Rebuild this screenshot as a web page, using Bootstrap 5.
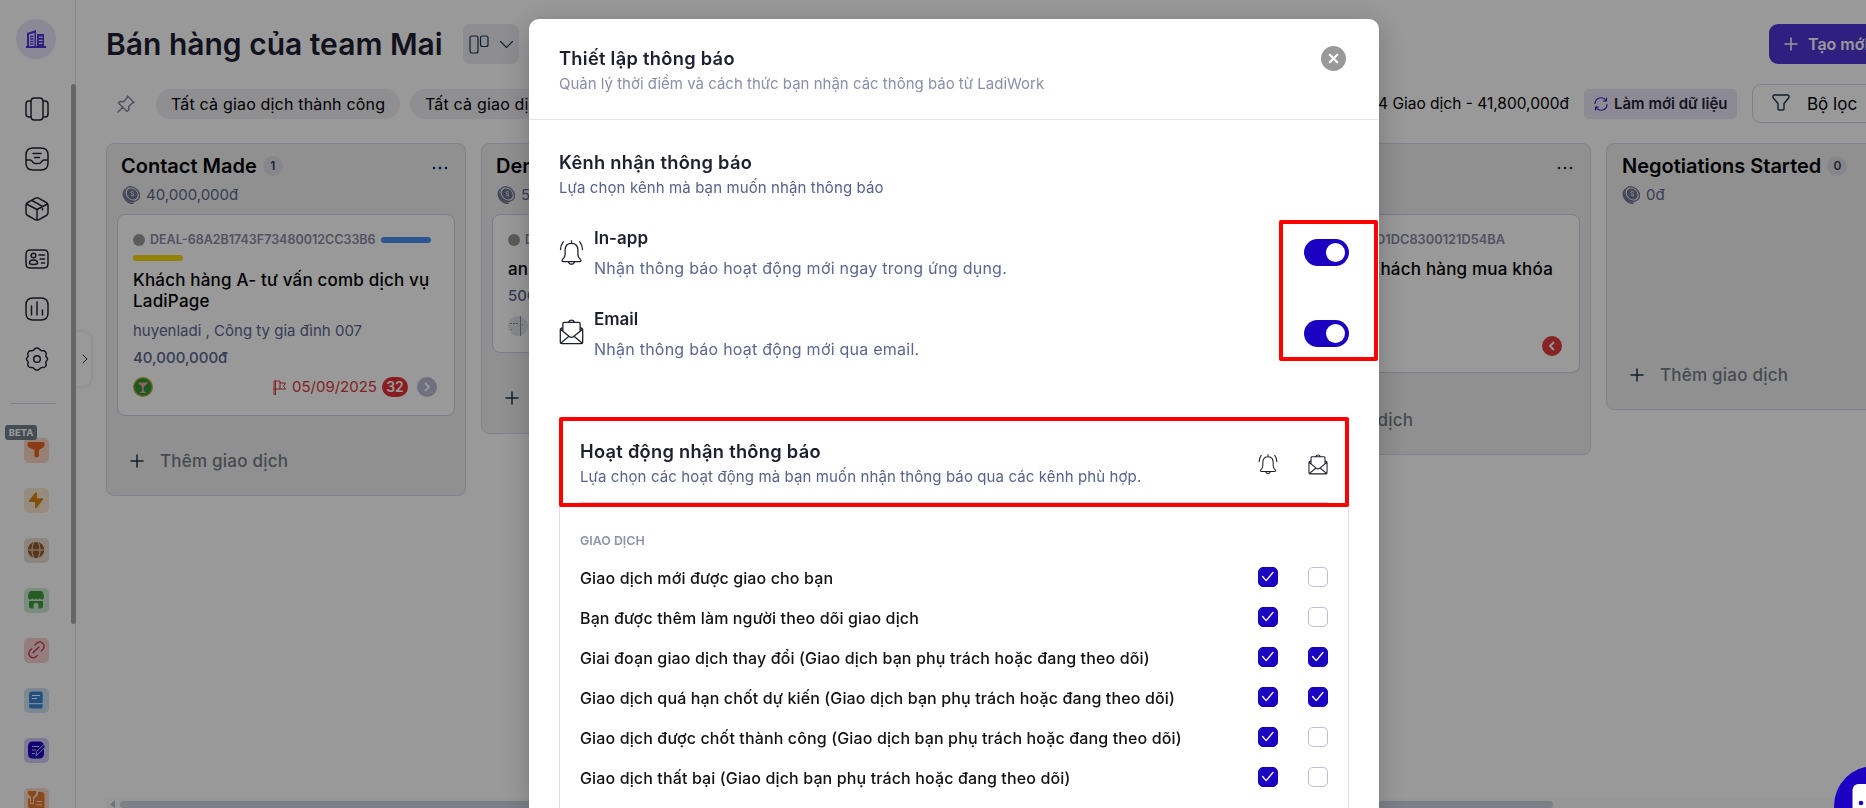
<!DOCTYPE html>
<html lang="vi">
<head>
<meta charset="utf-8">
<meta name="viewport" content="width=device-width, initial-scale=1">
<title>LadiWork - Thiết lập thông báo</title>
<link href="https://cdn.jsdelivr.net/npm/bootstrap@5.3.0/dist/css/bootstrap.min.css" rel="stylesheet">
<style>
body{font-family:Inter,"Liberation Sans",sans-serif;font-size:15px;line-height:20px;color:#000;height:100vh;overflow:hidden;background:#fff}
svg{display:block;flex:none}
.ln{fill:none;stroke:currentColor;stroke-linecap:round;stroke-linejoin:round}
.app{height:100vh;overflow:hidden}
.side{width:76px;flex:none;position:relative;border-right:1px solid #e4e4ec;color:#252435}
.side .logo{width:40px;height:40px;background:#eae5fb;border-radius:50%;margin:19px 0 25px 16px}
.side .ico{height:50px;width:73px}
.side .line{height:1px;background:#d5d5e8;width:45px;margin:19px 0 21px 11px}
.tile{width:25px;height:25px;border-radius:5px}
.beta{position:absolute;left:5px;top:425px;width:32px;height:15px;background:#72808c;color:#fff;font-size:9.5px;font-weight:700;line-height:15px;text-align:center;border-radius:3px}
.vbar{position:absolute;left:71px;top:84px;width:5px;height:540px;background:#aaa;border-radius:3px}
.tab-x{position:absolute;left:76px;top:332px;width:15px;height:54px;border-radius:0 8px 8px 0;box-shadow:0 0 4px rgba(0,0,0,.15);background:#fff;clip-path:inset(-5px -5px -5px 0);padding-left:3px}
.main{flex:1;min-width:0;padding-left:30px;overflow:hidden;position:relative}
.title{font-size:30px;font-weight:600;line-height:40px;color:#1e1f33}
.top{padding-top:24px;height:84px}
.view{width:56px;height:40px;border-radius:8px;background:#eaeaf2;margin-left:20px;color:#1c344c}
.new{width:150px;height:40px;border-radius:9px;background:#4f34d6;color:#fff;font-weight:600;font-size:16px}
.pill{height:30px;border-radius:15px;background:#eeeef4;font-size:16px;letter-spacing:.18px;line-height:30px;white-space:nowrap}
.reload{width:153px;height:30px;border-radius:5px;background:#eae8f6;font-weight:600;font-size:15px;color:#27243a}
.filt{width:150px;height:39px;border:1px solid #d5d5e8;border-radius:9px;font-size:17px}
.board{gap:15px;margin-top:20px}
.lane{width:360px;flex:none;border:1px solid #d8d8e8;border-radius:8px;background:#f0f0f0;padding:9px 10px}
.lane-t{font-size:20px;font-weight:600;line-height:26px}
.lane-s{height:31px;padding-left:5px;gap:6px}
.dots{margin-top:3px}
.cnt{width:20px;height:20px;border-radius:50%;background:#dfdfeb;font-size:12px;font-weight:600;color:#3c3c50;margin-left:6px}
.muted{color:#5c6690}
.deal{border:1px solid #d0d0e6;border-radius:8px;background:#fff;padding:15px;height:202px;margin:4px 0 0;width:338px}
.code{font-size:12.5px;font-weight:600;color:#8989a5;line-height:20px;white-space:nowrap}
.dot{width:12px;height:12px;border-radius:50%;background:#999;flex:none}
.tag{height:6px;width:50px;border-radius:3px;flex:none}
.deal-t{font-size:17px;font-weight:500;line-height:21px;letter-spacing:.2px}
.add{color:#747d86;font-size:17px;font-weight:500;line-height:20px;letter-spacing:.22px;padding-left:13px;gap:16px}
.add svg{color:#1c344c}
.date{color:#d93a3a;font-size:15px}
.hs{position:absolute;left:30px;right:0;bottom:0;height:10px;background:#fafafa}
.hs i{position:absolute;left:14px;width:1433px;top:3px;height:7px;border-radius:4px;background:#ccd5df}
.shade{position:fixed;inset:0;background:rgba(0,0,0,.4)}
.dlg{position:fixed;left:529px;top:19px;width:850px;height:789px;background:#fff;border-radius:10px 10px 0 0;box-shadow:0 6px 30px rgba(0,0,0,.24);color:#1e1f2e}
.dlg-h{height:101px;border-bottom:1px solid #e6e6e6;padding:27px 33px 0 30px}
h2.hd{font-size:18.3px;font-weight:600;line-height:24px;margin:0;letter-spacing:.28px}
.sub{font-size:15px;line-height:20px;color:#56628c;letter-spacing:.11px}
.x{width:25px;height:25px;border-radius:50%;background:#999}
.chan{height:60px;margin-bottom:21px;color:#1e1f2e}
.chan b{font-size:17px;font-weight:600;line-height:22px;display:block}
.chan p{font-size:16px;line-height:22px;margin:8px 0 0;letter-spacing:.24px}
.sw{width:45px;height:27px;border-radius:14px;background:#1b00c2;padding:4px;margin-bottom:2px}
.sw i{width:19px;height:19px;border-radius:50%;background:#fff}
.act{border:1px solid #dfdfee;height:440px;margin-top:54px}
.act-h{height:84px;margin:0 20px;border-bottom:1px solid #d0d0e6;padding-top:20px}
.act-h svg{margin-top:15px}
.grp{font-size:12.4px;font-weight:600;color:#8e91ac;margin:28px 20px 7px}
.rw{height:40px;padding:0 20px;font-size:16px;font-weight:500;color:#111;letter-spacing:.13px}
.cb{width:20px;height:20px;border-radius:5px;border:1px solid #bbbdda;margin:0 0 2px 30px;flex:none}
.cb.on{background:#1b00c2;border-color:#1b00c2}
.red{position:absolute;border:4px solid #f00;border-radius:2px}
.chat{position:fixed;left:1834px;top:766px;width:80px;height:80px;border-radius:50%;background:#1b00c2}
</style>
</head>
<body>
<svg width="0" height="0" class="position-absolute">
<symbol id="bell" viewBox="0 0 24 26"><path class="ln" stroke-width="1.3" d="M12 .8v2.6M12 3.4c-4 0-6.200 2.700-6.400 6.400v4.800c0 2-1 3.600-2.600 5-.9.9-.4 2 .8 2h16.400c1.200 0 1.700-1.100.8-2-1.600-1.400-2.600-3-2.600-5V9.800C18.200 6.100 16 3.400 12 3.400M9 21.800a3.100 3.100 0 0 0 6 0M3.700 1.800C2 3.900 1 6.500 1 9.500M20.300 1.800c1.700 2.100 2.700 4.700 2.700 7.700"/></symbol>
<symbol id="mail" viewBox="0 0 24 26"><path class="ln" stroke-width="1.3" d="M3.400 12V4.500c0-.7.5-1.200 1.200-1.200h14.800c.7 0 1.200.5 1.200 1.200V12M9 3.200c.5-1.200 1.600-2 3-2s2.500.8 3 2M3.400 8.200 1.400 9.600c-.4.300-.6.700-.6 1.200v12.400c0 .8.600 1.400 1.400 1.400h19.600c.8 0 1.400-.6 1.400-1.400V10.800c0-.5-.2-.9-.6-1.200l-2-1.400M1 10.300l8.800 7.200c1.400 1.200 3 1.200 4.400 0L23 10.300M1.500 24l8-6.700M22.500 24l-8-6.700"/></symbol>
<symbol id="coin" viewBox="0 0 18 18"><g fill="none" stroke="#6f7594" stroke-width="1.300"><ellipse cx="10.200" cy="8" rx="8" ry="6.400" transform="rotate(45 10.200 8)"/><ellipse cx="10.200" cy="8" rx="5.400" ry="4.200" transform="rotate(45 10.200 8)" fill="#6f7594"/><path d="M3 3.200C-.6 8 5 16.500 12.500 15.800M1.700 5.500C-.5 11 5.500 18 11.500 17.300"/><path stroke="#eee" stroke-width="1" d="M12 6.600C10.600 5 8.600 5.300 8.900 6.800c.3 1.300 2.700.7 2.900 2.100.1 1.200-1.800 1.300-2.900.1"/></g></symbol>
<symbol id="plus" viewBox="0 0 14 14"><path class="ln" stroke-width="1.500" d="M7 1v12M1 7h12"/></symbol>
<symbol id="dots" viewBox="0 0 16 4"><g fill="#1c344c"><circle cx="2" cy="2" r="1.300"/><circle cx="8" cy="2" r="1.300"/><circle cx="14" cy="2" r="1.300"/></g></symbol>
<symbol id="tick" viewBox="0 0 20 20"><path fill="none" stroke="#fff" stroke-width="1.500" stroke-linecap="round" stroke-linejoin="round" d="m4 9.500 4 4.500 7.500-9"/></symbol>
</svg>
<div class="app d-flex">
<aside class="side">
  <div class="logo d-flex align-items-center justify-content-center"><svg width="20" height="18" viewBox="0 0 20 18"><path fill="#4f34d6" fill-rule="evenodd" d="M0 16h1V3L10 0v16h1V4h7v12h2v2H0zM3 4.500V16h5.500V3zM13 6.500v1.300h3.500V6.500zm0 3.200V11h3.500V9.700zm0 3.100v1.300h3.500v-1.300z"/><path stroke="#4f34d6" stroke-width="1.300" d="M4 6.500h3.500M4 9h3.500M4 11.500h3.500M4 14h3.500"/></svg></div>
  <div class="ico d-flex align-items-center justify-content-center"><svg width="24" height="24" viewBox="0 0 24 24"><path class="ln" stroke-width="1.500" d="M9.500 1h5C17 1 18 2 18 4.500v15c0 2.500-1 3.500-3.500 3.500h-5C7 23 6 22 6 19.500v-15C6 2 7 1 9.500 1zM6 4H4C2 4 1 5 1 7v10c0 2 1 3 3 3h2M18 4h2c2 0 3 1 3 3v10c0 2-1 3-3 3h-2"/></svg></div>
  <div class="ico d-flex align-items-center justify-content-center"><svg width="24" height="24" viewBox="0 0 24 24"><path class="ln" stroke-width="1.500" d="M8 1h8c5 0 7 2 7 7v8c0 5-2 7-7 7H8c-5 0-7-2-7-7V8c0-5 2-7 7-7zM1 13h4c1 0 1.700.5 2.300 1.400l.6 1c1 1.600 7.200 1.600 8.200 0l.6-1c.6-.9 1.300-1.400 2.300-1.400h4M8 6.500h8M9.500 10.500h5"/></svg></div>
  <div class="ico d-flex align-items-center justify-content-center"><svg width="24" height="24" viewBox="0 0 24 24"><path class="ln" stroke-width="1.500" d="M10.500 1.200 2.700 5.500C1.500 6.200 1 7 1 8.200v7.600c0 1.200.5 2 1.700 2.700l7.800 4.300c1 .5 2 .5 3 0l7.800-4.300c1.200-.7 1.700-1.500 1.700-2.700V8.200c0-1.200-.5-2-1.700-2.700l-7.800-4.300c-1-.5-2-.5-3 0zM1.500 7 12 12.500 22.500 7M12 12.500V23M7 3.500l10.500 5.800V13"/></svg></div>
  <div class="ico d-flex align-items-center justify-content-center"><svg width="24" height="24" viewBox="0 0 24 24"><path class="ln" stroke-width="1.500" d="M6 3h12c4 0 5 1 5 5v8c0 4-1 5-5 5H6c-4 0-5-1-5-5V8c0-4 1-5 5-5zM14 8h5.500M15 12h4.500M16.500 16h3M4.500 16c0-4 8-4 8 0 0 2-8 2-8 0z"/><circle class="ln" stroke-width="1.500" cx="8.500" cy="8.500" r="2.300"/></svg></div>
  <div class="ico d-flex align-items-center justify-content-center"><svg width="24" height="24" viewBox="0 0 24 24"><path class="ln" stroke-width="1.500" d="M8 1h8c5 0 7 2 7 7v8c0 5-2 7-7 7H8c-5 0-7-2-7-7V8c0-5 2-7 7-7zM6.500 9v9M12 5v13M17.500 13v5"/></svg></div>
  <div class="ico d-flex align-items-center justify-content-center"><svg width="24" height="24" viewBox="0 0 24 24"><path class="ln" stroke-width="1.500" d="M9.500 2.200c1.300-1.600 3.700-1.600 5 0 .8 1.200 2 1.800 3.500 1.500 2-.2 3.800 2 3.100 3.800-.6 1.100-.5 1.800.3 2.700 1.500 1.100 1.500 2.700 0 3.800-.8.900-.9 1.600-.3 2.700.7 1.800-1.100 4-3.100 3.800-1.500-.3-2.700.3-3.500 1.500-1.300 1.600-3.700 1.600-5 0-.8-1.200-2-1.800-3.500-1.500-2 .2-3.800-2-3.100-3.800.6-1.100.5-1.800-.3-2.700-1.500-1.100-1.500-2.700 0-3.800.8-.9.900-1.600.3-2.700C2.200 5.700 4 3.500 6 3.700c1.500.3 2.700-.3 3.500-1.500z"/><circle class="ln" stroke-width="1.500" cx="12" cy="12" r="3.300"/></svg></div>
  <div class="line"></div>
  <div class="ico d-flex align-items-center justify-content-center"><div class="tile" style="background:#fbd8c6"><svg width="25" height="25" viewBox="0 0 25 25"><path fill="#e86524" d="M5 4h14c1 0 1.500.6 1.500 1.500v2c0 1-.4 1.500-1.200 2L15 12v5.500c0 1-.7 1.700-1.500 1.700H12c-1 0-1.600-.7-1.600-1.600V12L5 9.500C4 9 3.500 8.400 3.500 7.500v-2C3.500 4.600 4 4 5 4z"/></svg></div></div>
  <div class="ico d-flex align-items-center justify-content-center"><div class="tile" style="background:#faead0"><svg width="25" height="25" viewBox="0 0 25 25"><path fill="#d98518" d="M11 4.700c.8-1 2-.6 2 .6v5h5c1 0 1.300.8.7 1.700l-5.700 7.600c-.7 1-2 .6-2-.6v-5H6c-1 0-1.300-.8-.7-1.700z"/></svg></div></div>
  <div class="ico d-flex align-items-center justify-content-center"><div class="tile" style="background:#e8dcd4"><svg width="25" height="25" viewBox="0 0 25 25"><circle cx="12" cy="12" r="8.300" fill="#94592b"/><path fill="none" stroke="#e8dcd4" stroke-width="1" d="M3 12h18"/><ellipse cx="12" cy="12" rx="4" ry="9" fill="none" stroke="#e8dcd4"/></svg></div></div>
  <div class="ico d-flex align-items-center justify-content-center"><div class="tile" style="background:#cfe8d5"><svg width="25" height="25" viewBox="0 0 25 25"><path fill="#3f9b3d" d="M7 3h10c2 0 3.500 5 2.800 7-1 2-3.300 2-4 0-1 2-3 2-3.800 0-.8 2-2.800 2-3.800 0-.7 2-3 2-4 0C3.500 8 5 3 7 3zM5 13h14v5c0 1.700-.8 2.500-2.500 2.500h-2V17c0-3-5-3-5 0v3.500h-2C5.800 20.500 5 19.700 5 18z"/></svg></div></div>
  <div class="ico d-flex align-items-center justify-content-center"><div class="tile" style="background:#f5d0d2;color:#c62f3b"><svg width="25" height="25" viewBox="0 0 25 25"><path class="ln" stroke-width="1.200" d="M9 14.800 15 9M11 7l2-2c4-3 8.500 1.500 6.500 5.500-.5 1-1.500 2-2.500 2.500M13.500 17.500l-2 1.500c-4 2.500-8-2-6.200-5.500.5-1 1.500-2 2.500-2.700"/></svg></div></div>
  <div class="ico d-flex align-items-center justify-content-center"><div class="tile" style="background:#d0e5f4"><svg width="25" height="25" viewBox="0 0 25 25"><path fill="#3d86d4" d="M8 3.500h8.500c1.500 0 2.200.8 2.200 2.200V15H5V6.500c0-2 1-3 3-3zM5 16.300h13.700v2.200c0 1.400-.7 2-2 2H7.500c-1.700 0-2.500-.7-2.500-2z"/><path stroke="#fff" stroke-width="1" d="M8 7.500h8M8 10.500h5"/></svg></div></div>
  <div class="ico d-flex align-items-center justify-content-center"><div class="tile" style="background:#d2ccf4"><svg width="25" height="25" viewBox="0 0 25 25"><rect x="4" y="3.500" width="16" height="17" rx="4.500" fill="#1b00c2"/><path stroke="#d2ccf4" d="M8 8.500h7M8 12h4M8 15.500h3"/><path d="m12 17.500.7-4 6-6c1.500-1.500 3.300.5 2 2l-6 6z" fill="#1b00c2" stroke="#d2ccf4"/></svg></div></div>
  <div class="ico d-flex align-items-center justify-content-center"><div class="tile" style="background:#fbdcc8"><svg width="25" height="25" viewBox="0 0 25 25"><path fill="#e57a30" d="M4 3h8v3l-3 3v6H7V9L4 6zM14 4h3c2.500 0 3.500 1 3.500 3.500v13H8c-3 0-4-1-4-4V10l2 1v5h4v-5l4-4z"/><path stroke="#fbdcc8" d="M13 13.500h5M12 16.800h6"/></svg></div></div>
  <div class="beta">BETA</div>
  <div class="vbar"></div>
  <div class="tab-x d-flex align-items-center justify-content-center"><svg width="6" height="10" viewBox="0 0 6 10"><path class="ln" d="m1 1 4 4-4 4"/></svg></div>
</aside>
<main class="main">
  <div class="top d-flex">
    <div class="title text-nowrap">Bán hàng của team Mai</div>
    <div class="view d-flex align-items-center"><svg width="56" height="40" viewBox="0 0 56 40"><rect class="ln" stroke-width="1.200" x="7" y="12" width="8" height="17" rx="2"/><rect class="ln" stroke-width="1.200" x="17.500" y="12" width="7.500" height="10.500" rx="2"/><path class="ln" stroke-width="1.100" d="m37.500 17.500 6 6 6-6"/></svg></div>
    <div class="new ms-auto d-flex align-items-center text-nowrap" style="margin-right:-53px"><svg width="14" height="14" style="margin:0 10px 0 15px"><use href="#plus"/></svg>Tạo mới</div>
  </div>
  <div class="d-flex align-items-center" style="height:39px;margin-left:11px">
    <svg width="18" height="18" viewBox="0 0 18 18" style="color:#8889a5;margin-right:21px"><path class="ln" stroke-width="1.500" d="m1 17 5-5M10.500 1 17 7.500l-1.700.5-3.500 3.500v3.500L10 16.500 1.500 8 3 6.500l3.500.2L10 3z"/></svg>
    <div class="pill" style="width:244px;padding-left:15px">Tất cả giao dịch thành công</div>
    <div class="pill" style="width:230px;padding-left:15px;margin-left:10px">Tất cả giao dịch thất bại</div>
    <div class="ms-auto text-nowrap" style="font-size:15.500px">4 Giao dịch - 41,800,000đ</div>
    <div class="reload d-flex align-items-center text-nowrap" style="margin-left:15px"><svg width="14" height="14" viewBox="0 0 14 14" style="margin:0 6px 0 10px;color:#3a1fc8"><path class="ln" stroke-width="1.200" d="M1 6.500A6 6 0 0 1 12 3.500M13 7.500A6 6 0 0 1 2 10.500M12.500 1v3h-3M1.500 13v-3h3"/></svg>Làm mới dữ liệu</div>
    <div class="filt d-flex align-items-center text-nowrap" style="margin:0 -36px 0 15px"><svg width="18" height="17" viewBox="0 0 18 17" style="margin:0 17px 2px 19px;color:#1c344c"><path class="ln" stroke-width="1.400" d="M2 1h14c1 0 1.300 2 .7 3L12 9.500V15c0 .8-.6 1-1.200 1H7.200C6.600 16 6 15.800 6 15V9.500L1.300 4C.7 3 1 1 2 1z"/></svg>Bộ lọc</div>
  </div>
  <div class="board d-flex align-items-start">
    <section class="lane" style="height:353px">
      <div class="d-flex align-items-center" style="padding:0 7px 0 4px"><span class="lane-t">Contact Made</span><span class="cnt d-flex align-items-center justify-content-center">1</span><svg class="dots ms-auto" width="16" height="4"><use href="#dots"/></svg></div>
      <div class="lane-s d-flex align-items-center muted"><svg width="18" height="18"><use href="#coin"/></svg>40,000,000đ</div>
      <div class="deal">
        <div class="d-flex align-items-center" style="gap:5px"><span class="dot"></span><span class="code">DEAL-68A2B1743F73480012CC33B6</span><span class="tag" style="background:#4a90f0"></span></div>
        <div class="tag" style="background:#f5d50c;margin-top:5px"></div>
        <div class="deal-t" style="margin-top:9px">Khách hàng A- tư vấn comb dịch vụ LadiPage</div>
        <div class="muted" style="margin-top:9px">huyenladi , Công ty gia đình 007</div>
        <div class="muted fw-medium" style="margin-top:7px">40,000,000đ</div>
        <div class="d-flex align-items-center" style="height:20px;margin-top:9px">
          <svg width="20" height="20" viewBox="0 0 20 20"><circle cx="10" cy="10" r="10" fill="#a3b02c"/><circle cx="10" cy="10" r="8.500" fill="#2f8f3a"/><path fill="#f0a79c" d="M4.500 5.500h11L10.800 10v4l2.200 1.200v.8H7v-.8L9.200 14v-4z"/></svg>
          <span class="ms-auto d-flex align-items-center date"><svg width="13" height="15" viewBox="0 0 13 15" style="margin-right:6px"><path class="ln" stroke-width="1" d="M1 15V1h6v8H1M7 3h5.500l-2 3 2 3H7M2.500 1v14"/></svg>05/09/2025</span>
          <span class="rounded-pill text-white fw-semibold text-center" style="background:#e52f33;width:26px;height:20px;line-height:20px;font-size:14px;margin-left:5px">32</span>
          <svg width="20" height="20" viewBox="0 0 20 20" style="margin:0 2px 0 9px"><circle cx="10" cy="10" r="10" fill="#b9bad3"/><path stroke="#fff" stroke-width="2" fill="none" d="m8 6 4 4-4 4"/></svg>
        </div>
      </div>
      <div class="add d-flex align-items-center" style="margin-top:35px"><svg width="14" height="14"><use href="#plus"/></svg>Thêm giao dịch</div>
    </section>
    <section class="lane" style="height:291px">
      <div class="d-flex align-items-center" style="padding:0 7px 0 4px"><span class="lane-t">Demo</span></div>
      <div class="lane-s d-flex align-items-center muted"><svg width="18" height="18"><use href="#coin"/></svg>500,000đ</div>
      <div class="deal" style="height:139px">
        <div class="d-flex align-items-center" style="gap:5px"><span class="dot"></span><span class="code">DEAL-68A2</span></div>
        <div class="deal-t" style="margin-top:9px">anh</div>
        <div class="muted fw-medium" style="margin-top:6px">500,000đ</div>
        <svg width="20" height="20" viewBox="0 0 20 20" style="margin-top:10px"><circle cx="10" cy="10" r="10" fill="#e4e5ec"/><path stroke="#6e947f" stroke-dasharray="2 1" d="M2 7.500h9"/><path stroke="#8f91a3" d="M12.500 0v20M14 8.500h1M3 13.500h1"/></svg>
      </div>
      <div class="add d-flex align-items-center" style="margin-top:35px"><svg width="14" height="14"><use href="#plus"/></svg>Thêm giao dịch</div>
    </section>
    <section class="lane invisible"></section>
    <section class="lane" style="height:312px">
      <div class="d-flex align-items-center" style="height:26px;padding-right:7px"><svg class="dots ms-auto" width="16" height="4"><use href="#dots"/></svg></div>
      <div class="lane-s"></div>
      <div class="deal" style="height:159px">
        <div class="code text-end" style="padding-right:59px;font-size:12.8px">DEAL-68A2B1D1DC8300121D54BA</div>
        <div class="deal-t text-end" style="margin-top:9px;padding-right:11px">Khách hàng mua khóa</div>
        <svg width="20" height="20" viewBox="0 0 20 20" style="margin:56px 2px 0 auto"><circle cx="10" cy="10" r="10" fill="#e03b3f"/><path stroke="#fff" stroke-width="1.800" fill="none" d="m12 6-4 4 4 4"/></svg>
      </div>
      <div class="add d-flex align-items-center" style="margin-top:37px"><svg width="14" height="14"><use href="#plus"/></svg>Thêm giao dịch</div>
    </section>
    <section class="lane" style="height:267px">
      <div class="d-flex align-items-center" style="padding:0 7px 0 5px"><span class="lane-t">Negotiations Started</span><span class="cnt d-flex align-items-center justify-content-center">0</span></div>
      <div class="lane-s d-flex align-items-center muted"><svg width="18" height="18"><use href="#coin"/></svg>0đ</div>
      <div class="add d-flex align-items-center" style="margin-top:155px"><svg width="14" height="14"><use href="#plus"/></svg>Thêm giao dịch</div>
    </section>
  </div>
  <div class="hs"><svg width="6" height="10" viewBox="0 0 6 10" style="margin-left:3px"><path fill="#b8c0c9" d="M6 2v8L1 6.500z"/></svg><i></i></div>
</main>
</div>
<div class="shade"></div>
<div class="dlg" role="dialog">
  <div class="dlg-h d-flex justify-content-between"><div><h2 class="hd">Thiết lập thông báo</h2><div class="sub" style="color:#8b8ea9;margin-top:4px;letter-spacing:0">Quản lý thời điểm và cách thức bạn nhận các thông báo từ LadiWork</div></div>
  <div class="x"><svg width="25" height="25" viewBox="0 0 25 25"><path stroke="#fff" stroke-width="2.200" stroke-linecap="round" d="m8.800 8.800 7.400 7.400m0-7.400-7.400 7.400"/></svg></div></div>
  <div style="padding:30px 30px 0">
    <h2 class="hd">Kênh nhận thông báo</h2><div class="sub" style="margin-top:4px">Lựa chọn kênh mà bạn muốn nhận thông báo</div>
    <div class="d-flex align-items-center chan" style="margin-top:25px"><svg width="25" height="26"><use href="#bell"/></svg><div style="margin-left:10px"><b>In-app</b><p class="muted">Nhận thông báo hoạt động mới ngay trong ứng dụng.</p></div><div class="sw ms-auto d-flex justify-content-end"><i></i></div></div>
    <div class="d-flex align-items-center chan"><svg width="25" height="26" style="margin-bottom:4px"><use href="#mail"/></svg><div style="margin-left:10px"><b>Email</b><p class="muted">Nhận thông báo hoạt động mới qua email.</p></div><div class="sw ms-auto d-flex justify-content-end"><i></i></div></div>
    <div class="act">
      <div class="act-h d-flex"><div><h2 class="hd">Hoạt động nhận thông báo</h2><div class="sub" style="margin-top:4px">Lựa chọn các hoạt động mà bạn muốn nhận thông báo qua các kênh phù hợp.</div></div>
      <svg class="ms-auto" width="20" height="21"><use href="#bell"/></svg><svg width="20" height="21" style="margin-left:30px"><use href="#mail"/></svg></div>
      <div class="grp">GIAO DỊCH</div>
      <div class="rw d-flex align-items-center"><span class="me-auto">Giao dịch mới được giao cho bạn</span><span class="cb on"><svg width="18" height="18"><use href="#tick"/></svg></span><span class="cb"></span></div>
      <div class="rw d-flex align-items-center"><span class="me-auto">Bạn được thêm làm người theo dõi giao dịch</span><span class="cb on"><svg width="18" height="18"><use href="#tick"/></svg></span><span class="cb"></span></div>
      <div class="rw d-flex align-items-center"><span class="me-auto">Giai đoạn giao dịch thay đổi (Giao dịch bạn phụ trách hoặc đang theo dõi)</span><span class="cb on"><svg width="18" height="18"><use href="#tick"/></svg></span><span class="cb on"><svg width="18" height="18"><use href="#tick"/></svg></span></div>
      <div class="rw d-flex align-items-center"><span class="me-auto">Giao dịch quá hạn chốt dự kiến (Giao dịch bạn phụ trách hoặc đang theo dõi)</span><span class="cb on"><svg width="18" height="18"><use href="#tick"/></svg></span><span class="cb on"><svg width="18" height="18"><use href="#tick"/></svg></span></div>
      <div class="rw d-flex align-items-center"><span class="me-auto">Giao dịch được chốt thành công (Giao dịch bạn phụ trách hoặc đang theo dõi)</span><span class="cb on"><svg width="18" height="18"><use href="#tick"/></svg></span><span class="cb"></span></div>
      <div class="rw d-flex align-items-center"><span class="me-auto">Giao dịch thất bại (Giao dịch bạn phụ trách hoặc đang theo dõi)</span><span class="cb on"><svg width="18" height="18"><use href="#tick"/></svg></span><span class="cb"></span></div>
    </div>
  </div>
  <div class="red" style="left:750px;top:201px;width:99px;height:141px"></div>
  <div class="red" style="left:30px;top:398px;width:790px;height:90px"></div>
</div>
<div class="chat"><svg width="80" height="80" viewBox="0 0 80 80"><rect x="18.500" y="18" width="44" height="38" rx="6" fill="#fff"/><circle cx="27" cy="37" r="2.300" fill="#1b00c2"/></svg></div>
<script src="https://cdn.jsdelivr.net/npm/bootstrap@5.3.0/dist/js/bootstrap.bundle.min.js"></script>
</body>
</html>
